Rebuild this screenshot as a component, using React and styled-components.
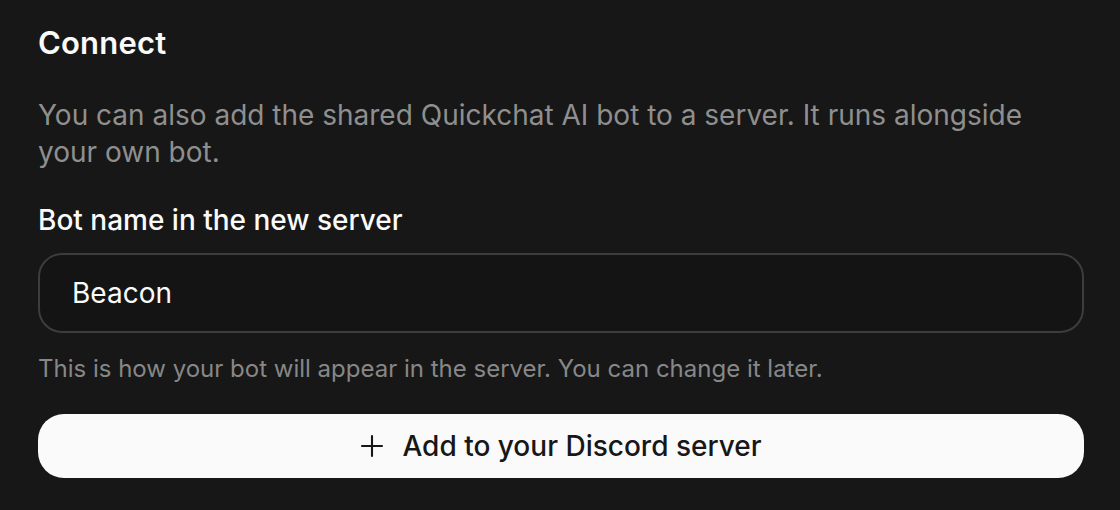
import React from "react";
import styled, { createGlobalStyle } from "styled-components";

const GlobalStyle = createGlobalStyle`
  html, body {
    margin: 0;
    padding: 0;
    background: #171717;
  }
  body {
    font-family: Inter, "Noto Sans", "Liberation Sans", sans-serif;
    -webkit-font-smoothing: antialiased;
  }
`;

const Section = styled.section`
  width: 1120px;
  height: 510px;
  box-sizing: border-box;
  padding: 21px 36px 0 38px;
  background: #171717;
  display: flex;
  flex-direction: column;
`;

const Heading = styled.h2`
  margin: 0;
  font-size: 31px;
  line-height: 44px;
  font-weight: 600;
  color: #fafafa;
  letter-spacing: 0.2px;
`;

const Description = styled.p`
  margin: 32px 0 0;
  max-width: 1030px;
  font-size: 28px;
  line-height: 37px;
  font-weight: 400;
  color: #8f8f8f;
`;

const Field = styled.div`
  margin-top: 31px;
  display: flex;
  flex-direction: column;
`;

const Label = styled.label`
  font-size: 28px;
  line-height: 37px;
  font-weight: 500;
  color: #fafafa;
`;

const Input = styled.input`
  margin-top: 14px;
  height: 80px;
  box-sizing: border-box;
  border: 2px solid #3d3d3d;
  border-radius: 24px;
  background: #141414;
  padding: 0 32px;
  font-family: inherit;
  font-size: 28px;
  font-weight: 400;
  color: #fafafa;
  outline: none;
`;

const Hint = styled.p`
  margin: 20px 0 0;
  font-size: 24px;
  line-height: 32px;
  color: #878787;
`;

const Button = styled.button`
  margin-top: 29px;
  height: 64px;
  border: none;
  border-radius: 26px;
  background: #fafafa;
  color: #171717;
  font-family: inherit;
  font-size: 28px;
  font-weight: 500;
  display: flex;
  align-items: center;
  justify-content: center;
  gap: 18px;
  cursor: pointer;
`;

const PlusIcon = () => (
  <svg width="24" height="24" viewBox="0 0 24 24" fill="none" stroke="#171717" strokeWidth="2.1" strokeLinecap="round">
    <path d="M12 2v20M2 12h20" />
  </svg>
);

export default function App() {
  return (
    <>
      <GlobalStyle />
      <Section>
        <Heading>Connect</Heading>
        <Description>
          You can also add the shared Quickchat AI bot to a server. It runs alongside your own bot.
        </Description>
        <Field>
          <Label htmlFor="bot-name">Bot name in the new server</Label>
          <Input id="bot-name" defaultValue="Beacon" />
          <Hint>This is how your bot will appear in the server. You can change it later.</Hint>
        </Field>
        <Button>
          <PlusIcon />
          Add to your Discord server
        </Button>
      </Section>
    </>
  );
}
